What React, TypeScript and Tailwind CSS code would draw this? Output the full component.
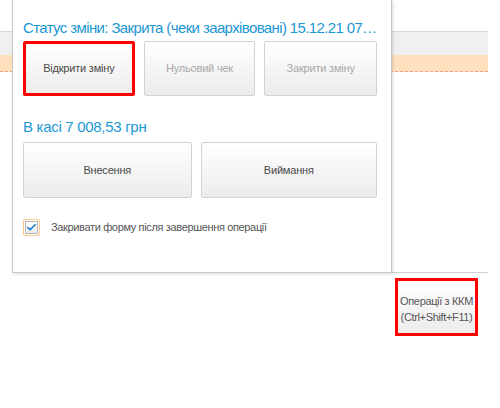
import { Check } from "lucide-react";

function Btn({
  label,
  disabled,
  active,
  className,
}: {
  label: string;
  disabled?: boolean;
  active?: boolean;
  className?: string;
}) {
  return (
    <div
      className={`flex items-center justify-center rounded-[2px] bg-gradient-to-b from-white to-[#ececec] text-[11px] tracking-[-0.2px] ${
        active
          ? "border-[3px] border-[#ff0000]"
          : "border border-[#d2d2d2]"
      } ${disabled ? "text-[#a8a8a8]" : "text-[#4a4a4a]"} ${className ?? ""}`}
    >
      {label}
    </div>
  );
}

export default function App() {
  return (
    <div
      className="relative h-[408px] w-[500px] overflow-hidden bg-white"
      style={{ fontFamily: '"Liberation Sans", Arial, sans-serif' }}
    >
      {/* page behind the popup */}
      <div className="flex w-[488px] flex-col pt-[31px]">
        <div className="h-[24px] border-t border-[#d9d9d9] bg-[#f0f0f0]" />
        <div className="h-[17px] border-b border-dashed border-[#f2a285] bg-[#ffe1bf]" />
        <div className="ml-[12px] mt-[200px] h-px bg-[#d0d0d0]" />
        <div className="flex justify-end pr-[10px] pt-[5px]">
          <div className="flex h-[58px] w-[83px] flex-col items-center justify-center border-[3px] border-[#ff0000] bg-gradient-to-b from-white to-[#ececec] pt-[3px] text-center text-[11px] leading-[16px] tracking-[-0.35px] text-[#555]">
            <span className="whitespace-nowrap">Операції з ККМ</span>
            <span className="whitespace-nowrap">(Ctrl+Shift+F11)</span>
          </div>
        </div>
      </div>

      {/* popup */}
      <div className="absolute left-[12px] top-0 flex h-[273px] w-[380px] flex-col border-x border-b border-[#c8c8c8] bg-white pl-[10px] pr-[14px] pt-[18px] shadow-[1px_1px_3px_rgba(0,0,0,0.15)]">
        <div className="whitespace-nowrap text-[15px] leading-[20px] tracking-[-0.62px] text-[#1b97d3]">
          Статус зміни: Закрита (чеки заархівовані) 15.12.21 07…
        </div>
        <div className="mt-[3px] flex gap-[9px]">
          <Btn label="Відкрити зміну" active className="h-[55px] w-[112px]" />
          <Btn label="Нульовий чек" disabled className="h-[55px] w-[112px]" />
          <Btn label="Закрити зміну" disabled className="h-[55px] w-[113px]" />
        </div>
        <div className="mt-[21px] text-[15px] leading-[20px] tracking-[-0.3px] text-[#1b97d3]">
          В касі 7 008,53 грн
        </div>
        <div className="mt-[5px] flex gap-[9px]">
          <Btn label="Внесення" className="h-[56px] w-[169px]" />
          <Btn label="Виймання" className="h-[56px] w-[177px]" />
        </div>
        <div className="mt-[21px] flex items-center gap-[11px]">
          <div className="flex h-[17px] w-[17px] items-center justify-center rounded-[2px] border border-[#f7c78f] bg-white">
            <div className="flex h-[13px] w-[13px] items-center justify-center border border-[#b5b5b5] bg-gradient-to-b from-white to-[#eaeaea]">
              <Check className="h-[15px] w-[15px] text-[#1577d0]" strokeWidth={3.5} />
            </div>
          </div>
          <span className="text-[11px] tracking-[-0.35px] text-[#555]">
            Закривати форму після завершення операції
          </span>
        </div>
      </div>
    </div>
  );
}
